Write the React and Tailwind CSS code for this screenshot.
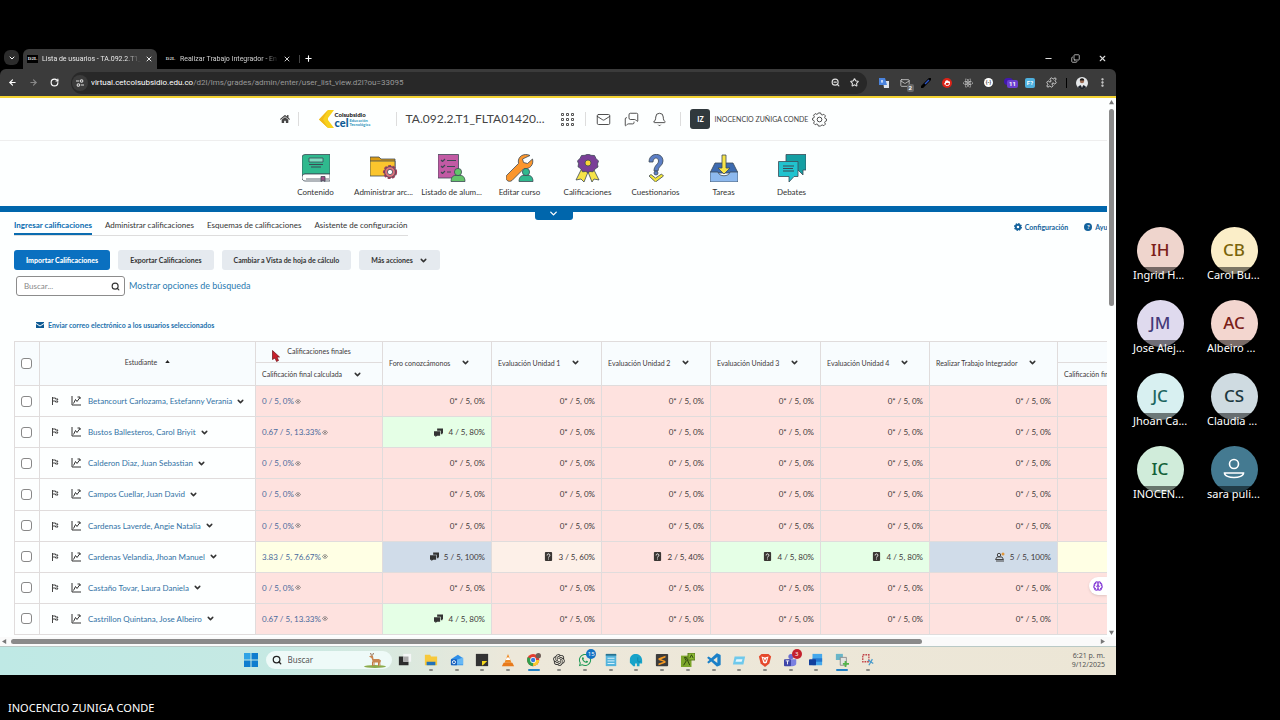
import { FaWhatsapp, FaHome, FaReact } from "react-icons/fa";
import { BiLogoVisualStudio } from "react-icons/bi";
import { RiOpenaiFill } from "react-icons/ri";
import {
  ArrowLeft, ArrowRight, Bell, Brain, ChevronDown, Copy, EllipsisVertical, Hand, Mail, MessagesSquare,
  Minus, Plus, Puzzle, RotateCw, Search, Star, X, ZoomOut,
} from "lucide-react";

const tools = [
  { label: "Contenido", icon: <BookIcon /> },
  { label: "Administrar arc...", icon: <FolderIcon /> },
  { label: "Listado de alum...", icon: <ClassIcon /> },
  { label: "Editar curso", icon: <WrenchIcon /> },
  { label: "Calificaciones", icon: <RibbonIcon /> },
  { label: "Cuestionarios", icon: <QuestionIcon /> },
  { label: "Tareas", icon: <InboxIcon /> },
  { label: "Debates", icon: <TalkIcon /> },
];

const ZERO = { text: "0* / 5, 0%", bg: "bg-[#fee2df]" };
const zeros = (n) => Array(n).fill(ZERO);
const red = "bg-[#fee2df]";
const green = "bg-[#e5ffe6]";
const blue = "bg-[#d0dce9]";

const students = [
  { name: "Betancourt Carlozama, Estefanny Verania", final: "0 / 5, 0%", bg: red, grades: zeros(6) },
  {
    name: "Bustos Ballesteros, Carol Briyit", final: "0.67 / 5, 13.33%", bg: red,
    grades: [{ text: "4 / 5, 80%", bg: green, icon: "forum" }, ...zeros(5)],
  },
  { name: "Calderon Diaz, Juan Sebastian", final: "0 / 5, 0%", bg: red, grades: zeros(6) },
  { name: "Campos Cuellar, Juan David", final: "0 / 5, 0%", bg: red, grades: zeros(6) },
  { name: "Cardenas Laverde, Angie Natalia", final: "0 / 5, 0%", bg: red, grades: zeros(6) },
  {
    name: "Cardenas Velandia, Jhoan Manuel", final: "3.83 / 5, 76.67%", bg: "bg-[#ffffe4]",
    grades: [
      { text: "5 / 5, 100%", bg: blue, icon: "forum" },
      { text: "3 / 5, 60%", bg: "bg-[#fdf0e8]", icon: "quiz" },
      { text: "2 / 5, 40%", bg: red, icon: "quiz" },
      { text: "4 / 5, 80%", bg: green, icon: "quiz" },
      { text: "4 / 5, 80%", bg: green, icon: "quiz" },
      { text: "5 / 5, 100%", bg: blue, icon: "task" },
    ],
  },
  { name: "Castaño Tovar, Laura Daniela", final: "0 / 5, 0%", bg: red, grades: zeros(6) },
  {
    name: "Castrillon Quintana, Jose Albeiro", final: "0.67 / 5, 13.33%", bg: red,
    grades: [{ text: "4 / 5, 80%", bg: green, icon: "forum" }, ...zeros(5)],
  },
];

const items = [
  "Foro conozcámonos", "Evaluación Unidad 1", "Evaluación Unidad 2",
  "Evaluación Unidad 3", "Evaluación Unidad 4", "Realizar Trabajo Integrador",
];

const people = [
  { initials: "IH", name: "Ingrid H...", color: "bg-[#efd5cd] text-[#7a2018]" },
  { initials: "CB", name: "Carol Bu...", color: "bg-[#fbeec8] text-[#7a6408]" },
  { initials: "JM", name: "Jose Alej...", color: "bg-[#dfdaee] text-[#443a78]" },
  { initials: "AC", name: "Albeiro ...", color: "bg-[#f3d6cf] text-[#7a2018]" },
  { initials: "JC", name: "Jhoan Ca...", color: "bg-[#d8f0f1] text-[#1c6660]" },
  { initials: "CS", name: "Claudia ...", color: "bg-[#cfdbe1] text-[#1d3840]" },
  { initials: "IC", name: "INOCEN...", color: "bg-[#d0ecda] text-[#136038]" },
  { initials: "", name: "sara puli...", color: "bg-[#447a91] text-white" },
];

/* COURSE TOOL ICONS */

function Draw({ children }) {
  return (
    <svg viewBox="0 0 28 28" className="size-7" fill="none" stroke="#3d4a55" strokeWidth="0.8" strokeLinejoin="round" aria-hidden="true">
      {children}
    </svg>
  );
}

function Person({ x, y, fill }) {
  return (
    <g fill={fill} transform={`translate(${x} ${y})`}>
      <path d="M0 13.500c0-4 2-6 4-6h6c2 0 4 2 4 6z" />
      <circle cx="7" cy="4" r="3.600" />
    </g>
  );
}

function BookIcon() {
  return (
    <Draw>
      <path d="M0 3.500A3 3 0 0 1 3 .5h25V20H3a3 3 0 0 0-3 3z" fill="#2fb98e" />
      <path d="M28 20H3c-4 0-4 7 0 7h25z" fill="#fff" />
      <path d="M4 25h23" />
      <path d="M19 22.500h4v5l-2-1.500-2 1.500z" fill="#a34f86" />
      <path d="M7 4h14v4H7z" fill="#7fdcc0" />
      <path d="M7 10.500h14M9 13h10" strokeWidth="1.200" />
    </Draw>
  );
}

function FolderIcon() {
  return (
    <Draw>
      <path d="M0 3h9l2 2h14v16H0z" fill="#d99b14" />
      <path d="M0 7h25v15H0z" fill="#fbc52d" />
      <circle cx="20" cy="18" r="6" fill="#c9586f" strokeWidth="2.200" stroke="#a03d5c" strokeDasharray="2.800 1.500" />
      <circle cx="20" cy="18" r="5.400" fill="#e0707c" />
      <circle cx="20" cy="18" r="2.600" fill="#fff" />
    </Draw>
  );
}

function ClassIcon() {
  return (
    <Draw>
      <path d="M0 .5h20.500V24H0z" fill="#c25aa4" />
      <path d="m3 6 1.500 1.500L7 5m-4 7 1.500 1.500L7 11m-4 7 1.500 1.500L7 17M9 6.500h9M9 12.500h8M9 18h4" strokeWidth="1.100" />
      <Person x="13" y="14" fill="#63c46a" />
    </Draw>
  );
}

function WrenchIcon() {
  return (
    <Draw>
      <path d="M24 1.500c-6-3-13 1-11.500 8L.5 21.500c-2 4 2 7.500 5.500 5L18 14.500c6 1 10-4 8.500-9.500l-5 4.500-4-1-1-3.500z" fill="#fb962d" />
      <Person x="13" y="14" fill="#2fb98e" />
    </Draw>
  );
}

function RibbonIcon() {
  return (
    <Draw>
      <path d="m8 14-6 12 5-1 3 3 4-10 4 10 2-3 5 1-6-12z" fill="#f7e448" />
      <path d="m14 0 3 1.300 3.500.2 1.500 3 2.500 2.500-1 3 .5 3-3 2-2 2.800-3-.3-2 1-2.500-1-3 .3-1.500-3-3-2 .5-3-1-3L6 4.500l1.500-3 3.500-.2z" fill="#7a3f97" />
      <circle cx="14" cy="9" r="3" fill="#fbd436" />
    </Draw>
  );
}

function QuestionIcon() {
  return (
    <Draw>
      <path d="M7 8c0-10 14-10 14-1 0 5-5 5-5 10h-4c0-6 4.500-6.500 4.500-10 0-4-5.500-4-5.500 1z" fill="#5c7fc6" />
      <circle cx="14" cy="19" r="2" fill="#5c7fc6" />
      <path d="m7 22 2-1.500 4.500 3.500 6-4 2 2-8 6z" fill="#f4e636" />
    </Draw>
  );
}

function InboxIcon() {
  return (
    <Draw>
      <path d="M5 9h18l5 10H0z" fill="#3d6bb0" />
      <path d="M0 18h8c1 5 11 5 12 0h8v10H0z" fill="#8db9ee" />
      <path d="M12 1h4v13h4l-6 6-6-6h4z" fill="#f7e448" />
    </Draw>
  );
}

function TalkIcon() {
  return (
    <Draw>
      <path d="M8 .5h20V16h-3v5l-5-5H8z" fill="#149fa3" />
      <path d="M.500 7.500H20v15h-4L11 28v-5.500H.500z" fill="#21c3cf" />
      <path d="M5 12h11M5 14.500h10M5 17h11" strokeWidth="1.100" />
    </Draw>
  );
}

/* SMALL ICONS */

function GradeIcon({ type }) {
  if (type === "forum") {
    return (
      <svg viewBox="0 0 10 10" className="size-[9px]" fill="#333" aria-hidden="true">
        <path d="M3.500.500H10V6H9v1.500L7.500 6V3h-4zM0 3.500h6.800v5H3.500L1.500 10V8.500H0z" />
      </svg>
    );
  }
  if (type === "quiz") {
    return (
      <svg viewBox="0 0 10 10" className="size-[9px]" aria-hidden="true">
        <rect x="1" width="8" height="10" rx="1" fill="#3a3633" />
        <path d="M3.500 3.800c0-2.300 3-2.300 3 0C6.500 5 5 5 5 6.200M5 7.300v1" stroke="#fff" strokeWidth="1" fill="none" />
      </svg>
    );
  }
  return (
    <svg viewBox="0 0 10 10" className="size-[10px]" aria-hidden="true">
      <path d="M1 9h8M.500 7.500 2 5h5l1.500 2.500z" fill="none" stroke="#444" />
      <circle cx="4" cy="3" r="1.700" fill="none" stroke="#444" />
      <circle cx="8" cy="2" r="1.500" fill="#e0963b" />
    </svg>
  );
}

function Flag() {
  return (
    <svg viewBox="0 0 8 8" className="size-2" fill="none" stroke="#444" aria-hidden="true">
      <path d="M1.500 0v8M1.500 1h3v1H7L6 3.500 7 5H4.500V4h-3" />
    </svg>
  );
}

function Progress() {
  return (
    <svg viewBox="0 0 10 10" className="size-[10px]" fill="none" stroke="#333" aria-hidden="true">
      <path d="M1 0v9h9M2.500 7.500l2-4 1.500 2 3-4M6.500 1h2.500v2" />
    </svg>
  );
}

function Eye() {
  return (
    <svg viewBox="0 0 8 6" className="h-[5px] w-[6px]" aria-hidden="true">
      <path d="M.5 3c2-3 5-3 7 0-2 3-5 3-7 0z" fill="none" stroke="#666" />
      <circle cx="4" cy="3" r="1" fill="#555" />
    </svg>
  );
}

// eight-lobed outline gear
function Gear() {
  return (
    <svg viewBox="0 0 16 16" className="size-[15px]" fill="none" stroke="#444" strokeLinejoin="round" aria-hidden="true">
      <path d="M6.800 1h2.400l.6 1.700 1.100.5 1.700-.8 1.700 1.700-.8 1.700.5 1.100 1.500.6v1.900l-1.500.7-.5 1.100.8 1.700-1.700 1.700-1.700-.8-1.100.5L9.200 15H6.800l-.6-1.700-1.100-.5-1.700.8-1.700-1.700.8-1.700L2 9.100.500 8.500V6.800L2 6.200l.5-1.100-.8-1.700 1.700-1.700 1.700.8 1.100-.5z" />
      <circle cx="8" cy="8" r="2.500" />
    </svg>
  );
}

function SettingsDot() {
  return (
    <svg viewBox="0 0 10 10" className="size-2" aria-hidden="true">
      <circle cx="5" cy="5" r="4" fill="#14629c" stroke="#14629c" strokeWidth="2" strokeDasharray="1.800 1.300" />
      <circle cx="5" cy="5" r="1.600" fill="#fff" />
    </svg>
  );
}

function Caret({ label }) {
  return (
    <button aria-label={label} className="shrink-0">
      <ChevronDown className="size-[9px] text-[#333]" strokeWidth={4} />
    </button>
  );
}

function Check({ label }) {
  return (
    <input type="checkbox" aria-label={label} className="mx-auto block size-[11px] appearance-none rounded-[3px] border border-[#888] bg-white" />
  );
}

/* BROWSER */

function Tab({ title, active }) {
  return (
    <div className={active ? "flex h-5 w-[134px] items-center gap-1 rounded-t-md bg-[#3b3b3b] px-1 text-[#e8e8e8]" : "flex h-5 w-[134px] items-center gap-1 px-1 text-[#d0d0d0]"}>
      <span className="w-[11px] shrink-0 bg-black text-center font-['Liberation_Serif',serif] text-[5px] font-bold">D2L</span>
      <span className="min-w-0 flex-1 whitespace-nowrap [mask-image:linear-gradient(to_right,black_85%,transparent)]">{title}</span>
      <button aria-label={"Cerrar " + title}><X className="size-2" strokeWidth={3} /></button>
    </div>
  );
}

function Extensions() {
  return (
    <div className="flex shrink-0 items-center gap-[11px] pr-2">
      <svg viewBox="0 0 10 10" className="size-[10px]">
        <path d="M4 3h6v7H5z" fill="#dde3ea" /><path d="M0 0h6l2 7H0z" fill="#4a83dd" />
        <path d="M2 3h2M3 2v3" stroke="#fff" strokeWidth=".8" />
      </svg>
      <span className="relative">
        <Mail className="size-[10px] text-[#ccc]" />
        <span className="absolute -right-1 -bottom-1 rounded-xs bg-[#666] px-[2px] text-[6px] leading-[8px] font-bold text-white">2</span>
      </span>
      <svg viewBox="0 0 10 10" className="size-[10px]">
        <path d="M1 9 9 1" stroke="#000" strokeWidth="3" strokeLinecap="round" /><path d="m4 6 4-4" stroke="#2e56c8" strokeWidth="1.500" />
      </svg>
      <span className="rounded-full bg-[#dc2318] p-[2px] text-white"><Hand className="size-[6px]" strokeWidth={4} /></span>
      <FaReact className="size-[10px] text-[#ddd]" />
      <span className="grid size-[9px] place-items-center rounded-full bg-white text-[5px] leading-none font-bold text-[#444]">{"{-}"}</span>
      <span className="relative size-[10px]">
        <span className="block h-[7px] w-[9px] rounded-full bg-[#4318b0]" />
        <span className="absolute top-[2px] left-[3px] rounded-xs bg-[#6b3fd0] px-[2px] text-[6px] leading-[8px] font-bold text-white">11</span>
      </span>
      <span className="grid size-[10px] place-items-center rounded-[2px] bg-[#4eb0de] text-[6px] leading-none font-bold text-white">F?</span>
      <div className="flex items-center gap-[9px]">
        <Puzzle className="size-[11px] text-[#ddd]" />
        <span className="h-[10px] w-px bg-black" />
        <svg viewBox="0 0 12 12" className="size-3">
          <circle cx="6" cy="6" r="6" fill="#e6e8ea" />
          <path d="M2 10.500C2 7 10 7 10 10.500 8 12.500 4 12.500 2 10.500z" fill="#20242c" />
          <circle cx="6" cy="4" r="2.200" fill="#9c6c54" /><path d="M3.800 3.500c0-3 4.400-3 4.400 0z" fill="#1c1816" />
          <path d="m5 8 1 3 1-3z" fill="#fff" />
        </svg>
        <button aria-label="Menú"><EllipsisVertical className="size-[11px] text-[#ddd]" strokeWidth={3} /></button>
      </div>
    </div>
  );
}

function BrowserBar() {
  return (
    <div className="font-[Roboto,sans-serif] text-[7px]">
      <div className="flex h-6 items-end bg-black pt-1 pl-1">
        <button aria-label="Buscar pestañas" className="mr-1 mb-1 grid size-[15px] place-items-center rounded-md bg-[#2c2c2c] text-white">
          <ChevronDown className="size-2" strokeWidth={3} />
        </button>
        <Tab title="Lista de usuarios - TA.092.2.T1_" active />
        <span className="w-1" />
        <Tab title="Realizar Trabajo Integrador - En" />
        <span className="mx-1 mb-[6px] h-2 w-px bg-[#444]" />
        <button aria-label="Nueva pestaña" className="mb-[6px] text-white"><Plus className="size-[9px]" strokeWidth={3} /></button>
        <div className="mb-[6px] ml-auto flex gap-[18px] pr-[9px] text-[#ddd]">
          <button aria-label="Minimizar"><Minus className="size-[9px]" strokeWidth={3} /></button>
          <button aria-label="Restaurar"><Copy className="size-[9px] -scale-y-100" /></button>
          <button aria-label="Cerrar"><X className="size-[9px]" strokeWidth={3} /></button>
        </div>
      </div>
      <div className="flex h-[27px] items-center gap-3 rounded-t-md bg-[#3b3b3b] pl-2">
        <button aria-label="Atrás"><ArrowLeft className="size-[9px] text-white" strokeWidth={3} /></button>
        <button aria-label="Adelante"><ArrowRight className="size-[9px] text-[#888]" strokeWidth={3} /></button>
        <button aria-label="Recargar"><RotateCw className="size-[9px] text-white" strokeWidth={3} /></button>
        <div className="flex h-[22px] min-w-0 flex-1 items-center rounded-full bg-[#282828] pr-2 pl-px text-[8px] text-[#999]">
          <span className="mr-[3px] grid size-4 place-items-center rounded-full bg-[#3b3b3b]">
            <svg viewBox="0 0 10 10" className="size-2" fill="none" stroke="#ddd" strokeWidth="1.300">
              <path d="M0 2.500h4M6 7.500h4" /><circle cx="7" cy="2.500" r="1.600" /><circle cx="3" cy="7.500" r="1.600" />
            </svg>
          </span>
          <span className="min-w-0 flex-1 truncate">
            <span className="text-white">virtual.cetcolsubsidio.edu.co</span>/d2l/lms/grades/admin/enter/user_list_view.d2l?ou=33095
          </span>
          <ZoomOut className="mr-[10px] size-[9px] text-[#ddd]" strokeWidth={3} />
          <Star className="size-[9px] text-[#ddd]" strokeWidth={3} />
        </div>
        <Extensions />
      </div>
    </div>
  );
}

/* COURSE HEADER */

function CourseHeader() {
  return (
    <header>
      <div className="flex h-[43px] items-center justify-center border-b border-[#eee] text-[#444]">
        <FaHome className="size-[10px]" />
        <span className="mr-5 ml-2 h-[14px] w-px bg-[#ddd]" />
        <div className="flex w-[58px] items-center">
          <svg viewBox="0 0 16 18" className="h-[18px] w-4 shrink-0">
            <path d="M9 0h6L9 8v2l6 8H9L0 9.500z" fill="#f8d11c" /><path d="M0 9.500 9 0 4 9.500 9 18z" fill="#f1b91a" />
          </svg>
          <div>
            <p className="text-[6px] leading-[7px] font-black text-[#222]">Colsubsidio</p>
            <div className="flex items-center gap-px">
              <span className="text-[11px] leading-[9px] font-black text-[#0d5a94]">cel</span>
              <span className="text-[4px] leading-[4px] font-bold text-[#2a91bb]">Educación<br />Tecnológica</span>
            </div>
          </div>
        </div>
        <span className="mr-[9px] ml-[19px] h-[14px] w-px bg-[#ddd]" />
        <h1 className="text-[12px]">TA.092.2.T1_FLTA01420...</h1>
        <button aria-label="Mis cursos" className="ml-4">
          <svg viewBox="0 0 15 15" className="size-[15px]" fill="none" stroke="#555">
            <path d="M1.500 1.500h2v2h-2zM6.500 1.500h2v2h-2zM11.500 1.500h2v2h-2zM1.500 6.500h2v2h-2zM6.500 6.500h2v2h-2zM11.500 6.500h2v2h-2zM1.500 11.500h2v2h-2zM6.500 11.500h2v2h-2zM11.500 11.500h2v2h-2z" />
          </svg>
        </button>
        <span className="mx-[10px] h-[14px] w-px bg-[#ddd]" />
        <div className="flex items-center gap-[13px]">
          <button aria-label="Correo"><Mail className="size-[15px]" strokeWidth={1.5} /></button>
          <button aria-label="Mensajes"><MessagesSquare className="size-[15px] -scale-x-100" strokeWidth={1.5} /></button>
          <button aria-label="Notificaciones"><Bell className="size-[15px]" strokeWidth={1.5} /></button>
        </div>
        <span className="mr-[9px] ml-[13px] h-[14px] w-px bg-[#ddd]" />
        <button className="flex items-center gap-1 text-[7px]">
          <span className="grid size-5 place-items-center rounded-[3px] bg-[#30393d] font-black text-white">IZ</span>
          INOCENCIO ZUÑIGA CONDE
        </button>
        <button aria-label="Configuración del curso" className="ml-1"><Gear /></button>
      </div>
      <nav className="flex h-[65px] justify-center pt-[13px]">
        {tools.map((t) => (
          <a key={t.label} href="#" className="flex w-[68px] flex-col items-center gap-[5px] text-[8px] leading-[10px] whitespace-nowrap text-[#333]">
            {t.icon}
            {t.label}
          </a>
        ))}
      </nav>
      <div className="relative h-[6px] bg-[#0066ac]">
        <button aria-label="Mostrar más" className="absolute top-0 left-1/2 grid h-[14px] w-[38px] -translate-x-1/2 place-items-center rounded-b-[3px] bg-[#0066ac] text-white">
          <ChevronDown className="size-[11px]" strokeWidth={3} />
        </button>
      </div>
    </header>
  );
}

/* GRADES TABLE */

function GradesTable() {
  const cell = "border border-[#e0dcdc]";
  return (
    <table className="h-[294px] w-[1171px] table-fixed border-collapse text-[8px] leading-[10px] text-[#40383a]">
      <colgroup>
        <col className="w-[25px]" />
        <col className="w-[216px]" />
        <col className="w-[127px]" />
        <col className="w-[109px]" />
        <col className="w-[110px]" />
        <col className="w-[109px]" />
        <col className="w-[110px]" />
        <col className="w-[109px]" />
        <col className="w-[128px]" />
        <col className="w-[128px]" />
      </colgroup>
      <thead className="bg-[#f8fcfe] text-[7px]">
        <tr className="h-[21px]">
          <th rowSpan={2} className={`${cell} pr-[2px]`}><Check label="Seleccionar todos" /></th>
          <th rowSpan={2} className={`${cell} pb-1 font-normal`}>
            <button className="inline-flex items-center gap-2">
              Estudiante
              <svg viewBox="0 0 6 4" className="h-[3px] w-[5px]"><path d="M0 4 3 0l3 4z" fill="#222" /></svg>
            </button>
          </th>
          <th className={`${cell} pb-[2px] font-normal`}>Calificaciones finales</th>
          {items.map((item) => (
            <th key={item} rowSpan={2} className={`${cell} pb-[2px] pl-[6px] font-normal`}>
              <span className="flex items-center gap-[11px] whitespace-nowrap">
                {item}
                <Caret label={"Acciones de " + item} />
              </span>
            </th>
          ))}
          <th className={cell} />
        </tr>
        <tr className="h-[23px]">
          <th className={`${cell} pl-[6px] font-normal`}>
            <span className="flex items-center gap-[11px] whitespace-nowrap">
              Calificación final calculada
              <Caret label="Acciones de calificación final" />
            </span>
          </th>
          <th className={`${cell} pl-[6px] text-left font-normal whitespace-nowrap`}>Calificación final ajustada</th>
        </tr>
      </thead>
      <tbody>
        {students.map((s) => (
          <tr key={s.name} className="h-[31px]">
            <td className={`${cell} pr-[2px]`}><Check label={"Seleccionar " + s.name} /></td>
            <td className={`${cell} pl-[11px]`}>
              <div className="flex items-center whitespace-nowrap">
                <Flag />
                <span className="mr-[7px] ml-3"><Progress /></span>
                <a href="#" className="mr-1 text-[#3272a5]">{s.name}</a>
                <Caret label={"Acciones de " + s.name} />
              </div>
            </td>
            <td className={`${cell} ${s.bg} pl-[6px]`}>
              <a href="#" className="flex items-center gap-px text-[#4a6a9c]">{s.final}<Eye /></a>
            </td>
            {s.grades.map((g, i) => (
              <td key={i} className={`${cell} ${g.bg} pr-[6px]`}>
                <div className="flex items-center justify-end gap-[5px] whitespace-nowrap">
                  {g.icon && <GradeIcon type={g.icon} />}
                  {g.text}
                </div>
              </td>
            ))}
            <td className={`${cell} ${s.bg}`} />
          </tr>
        ))}
      </tbody>
    </table>
  );
}

function GradesPage() {
  const gray = "flex h-5 items-center gap-[6px] rounded-[3px] bg-[#e5eaef] px-3 text-[#333]";
  return (
    <main className="relative min-w-0 flex-1 overflow-hidden bg-[#fdffff] font-[Lato,sans-serif]">
      <CourseHeader />
      <div className="pb-[2px] pl-[14px]">
        <div className="-mr-2 flex items-start justify-between pt-[7px]">
          <nav className="flex gap-[13px] border-b border-[#ddd] text-[8px] leading-[12px] text-[#333]">
            <a href="#" className="h-4 border-b-2 border-[#0a6cb0] font-bold text-[#0a6cb0]">Ingresar calificaciones</a>
            <a href="#">Administrar calificaciones</a>
            <a href="#">Esquemas de calificaciones</a>
            <a href="#">Asistente de configuración</a>
          </nav>
          <div className="flex gap-4 pt-[2px] text-[7px] leading-[12px] font-bold text-[#14629c]">
            <a href="#" className="flex items-center gap-[3px]"><SettingsDot />Configuración</a>
            <a href="#" className="flex items-center gap-[3px]">
              <span className="grid size-2 place-items-center rounded-full bg-[#14629c] text-[6px] leading-none text-white">?</span>Ayuda
            </a>
          </div>
        </div>
        <div className="mt-[14px] flex gap-2 text-[7px] font-bold">
          <button className="h-5 rounded-[3px] bg-[#0a70c0] px-3 font-black text-white">Importar Calificaciones</button>
          <button className={gray}>Exportar Calificaciones</button>
          <button className={gray}>Cambiar a Vista de hoja de cálculo</button>
          <button className={gray}>Más acciones<ChevronDown className="size-[9px]" strokeWidth={4} /></button>
        </div>
        <div className="mt-[6px] flex items-center gap-1 pl-[2px]">
          <label className="flex h-5 w-[109px] items-center rounded-[3px] border border-[#8c8c8c] bg-white pr-1 pl-[7px]">
            <input type="search" aria-label="Buscar" placeholder="Buscar..." className="w-0 min-w-0 flex-1 text-[8px] outline-none placeholder:text-[#888]" />
            <Search className="size-[9px] text-[#333]" strokeWidth={3} />
          </label>
          <a href="#" className="text-[9px] leading-[12px] text-[#2a7ab0]">Mostrar opciones de búsqueda</a>
        </div>
        <a href="#" className="mt-6 mb-[11px] flex h-[10px] w-fit items-center gap-1 pl-[22px] text-[7px] leading-[10px] font-bold text-[#1a70ad]">
          <svg viewBox="0 0 8 6" className="h-[6px] w-2"><path d="M0 0h8v1L4 3.500 0 1zM0 2l4 2.500L8 2v4H0z" fill="#0d5a94" /></svg>
          Enviar correo electrónico a los usuarios seleccionados
        </a>
        <GradesTable />
      </div>
      {/* mouse pointer and floating assistant */}
      <svg viewBox="0 0 8 12" className="absolute top-[252px] left-[272px] h-3 w-2"><path d="M.5.5v9L3 8l1.500 3.500 2-1L5 7h2.500z" fill="#c8202c" stroke="#6b1018" strokeWidth=".7" /></svg>
      <button aria-label="Asistente" className="absolute right-0 bottom-[42px] grid size-[18px] place-items-center rounded-l-full bg-white text-[#8a45d8] shadow">
        <Brain className="size-[10px]" strokeWidth={3} />
      </button>
    </main>
  );
}

function Arrow({ d }) {
  return <svg viewBox="0 0 6 6" className="size-[5px] shrink-0"><path d={d} fill="#777" /></svg>;
}

/* TASKBAR */

const apps = [
  { name: "Vista de tareas", open: false, icon: <><path d="M6 1h9v9H6z" fill="#f4f6f6" /><path d="M1 4h5v6h6v4H1z" fill="#2c2c2c" /><path d="M6 4h6v6H6z" fill="#aaa" /></> },
  { name: "Explorador", open: true, icon: <><path d="M1 2h6l1 2h7v10H1z" fill="#f7c93c" /><path d="M3 10h10v4H3z" fill="#2272b8" /></> },
  { name: "Outlook", open: true, icon: <><path d="m1 7 8-5 6 4v8H3z" fill="#2f8fe8" /><path d="M7 8 15 5v8H7z" fill="#67b8f5" /><rect x="1" y="7" width="7" height="7" rx="1" fill="#1560bd" /><circle cx="4.500" cy="10.500" r="1.800" fill="none" stroke="#fff" /></> },
  { name: "Notas", open: true, icon: <><path d="M1 1h14v14H1z" fill="#333" /><path d="M8 9h6l-5 5H8z" fill="#f5d91c" /></> },
  { name: "VLC", open: true, icon: <><path d="m8 1 4 10H4z" fill="#f08a24" /><path d="m6.500 5h3l1 3h-5z" fill="#fff" /><path d="M3 11h10l2 4H1z" fill="#e87a1c" /></> },
  { name: "Chrome", open: "active", icon: <><circle cx="7" cy="8" r="7" fill="#e23d30" /><path d="M7 8 1 4.500A7 7 0 0 0 7 15z" fill="#2fa14f" /><path d="M7 8h7a7 7 0 0 1-7 7z" fill="#f8cb30" /><circle cx="7" cy="8" r="3.300" fill="#fff" /><circle cx="7" cy="8" r="2.500" fill="#3878e0" /><circle cx="13" cy="3" r="3" fill="#6d5d56" /></> },
  { name: "ChatGPT", open: true, node: <RiOpenaiFill className="size-[14px] text-[#222]" /> },
  { name: "WhatsApp", open: true, badge: "15", badgeColor: "bg-[#1372c4]", node: <FaWhatsapp className="size-[14px] text-[#1f9a56]" /> },
  { name: "Bloc de notas", open: true, icon: <><path d="M2 2h12v13H2z" fill="#54b4dc" /><path d="M2 1h12v2H2z" fill="#27718f" /><path d="M4 6h8M4 9h8M4 12h8" stroke="#e9f8ff" /></> },
  { name: "Base de datos", open: true, icon: <><path d="M1 8c0-9 13-9 14 0v4h-3v3H9v-3H7v3H5l-4-4z" fill="#18a3c9" /><path d="M10 5v4c0 2 3 2 3 0" fill="none" stroke="#0f86a8" /></> },
  { name: "Sublime", open: true, icon: <><rect x="1" y="1" width="14" height="14" rx="1" fill="#3c3c3c" /><path d="m12 3-8 3v2l6 2-6 2v2l8-3V9L7 7l5-2z" fill="#f79a22" /></> },
  { name: "Editor", open: true, icon: <><path d="M0 3h12v13H0z" fill="#7ca62a" /><path d="M8 0h8v8H8z" fill="#8cba35" stroke="#506e18" /><path d="m3 14 3-5-2-4h2l4 9M10 6l2-4 2 4" fill="none" stroke="#263b0a" /></> },
  { name: "VS Code", open: true, node: <BiLogoVisualStudio className="size-4 text-[#1b80c8]" /> },
  { name: "Ejecutar", open: true, icon: <><path d="M3 4h12l-2 9H1z" fill="#6fc9ec" /><path d="M5 7h7l-1 3H4z" fill="#e4f7ff" /></> },
  { name: "Brave", open: true, icon: <><path d="m4 1h8l3 3-2 8-5 4-5-4-2-8z" fill="#e5492c" /><path d="m4 4 4 1 4-1-2 7-2 1-2-1z" fill="#fff" /><path d="m6 6 2 4 2-4" fill="none" stroke="#e5492c" /></> },
  { name: "Teams", open: true, badge: "3", badgeColor: "bg-[#c4222e]", icon: <><circle cx="8" cy="4" r="3" fill="#6a6fd0" /><path d="M4 7h10v5c0 4-8 4-9 1z" fill="#7b80e0" /><rect x="0" y="7" width="8" height="8" rx="1" fill="#3f45a8" /><path d="M2 9h4M4 9v4" stroke="#fff" /></> },
  { name: "Documentos", open: true, icon: <><path d="M4 1h11v13H4z" fill="#45a8ec" /><path d="M4 6h11v4H4z" fill="#2478d0" /><rect x="0" y="7" width="8" height="7" rx="1" fill="#123f9c" /></> },
  { name: "Conexión", open: "active", icon: <><path d="M1 1h8v7H1z" fill="#69b6c8" /><path d="M6 5h7v9H6z" fill="#e4e4e0" stroke="#888" /><path d="M12 9v7M9 12.500h7" stroke="#54b44a" strokeWidth="2" /></> },
  { name: "Recortes", open: true, icon: <><path d="M2 2h7v8H2z" fill="none" stroke="#c2454a" strokeWidth="1.500" strokeDasharray="2 1" /><path d="m8 8 6 4M9 14l4-7" stroke="#4b9ccc" strokeWidth="1.500" /></> },
];

function Taskbar() {
  return (
    <div className="grid h-[29px] grid-cols-[minmax(0,1fr)_auto_minmax(0,1fr)] items-center border-t border-[#b9c9c6] bg-[linear-gradient(to_right,#bfe9e5_0%,#c6e9e3_25%,#ede8da_46%,#ece6d6_100%)] pb-[2px] font-['Noto_Sans',sans-serif]">
      <span />
      <div className="flex items-center pl-2">
        <button aria-label="Inicio" className="mr-2">
          <svg viewBox="0 0 14 14" className="size-[14px]" fill="#0f7dcf"><path d="M0 0h6.500v6.500H0z" fill="#2fa4e6" /><path d="M7.500 0H14v6.500H7.500zM0 7.500h6.500V14H0zM7.500 7.500H14V14H7.500z" /></svg>
        </button>
        <label className="mr-px flex h-[18px] w-[126px] items-center gap-[6px] rounded-full bg-[#eefaf8] px-[6px]">
          <Search className="size-[10px] text-[#222]" strokeWidth={3} />
          <input type="search" aria-label="Buscar en Windows" placeholder="Buscar" className="w-0 min-w-0 flex-1 text-[8px] outline-none placeholder:text-[#555]" />
          <svg viewBox="0 0 22 16" className="h-4 w-[22px]">
            <ellipse cx="11" cy="14.500" rx="11" ry="1.500" fill="#8bab4a" />
            <path d="M8.500 14V9.500M10 14V9.500M14.500 14V9.500M16 13.500 15.500 9" fill="none" stroke="#c07a44" strokeWidth="1" />
            <path d="M5 4.500 7 3.500 9 4l.5 3H15l2 1.500-.5 2H9L7.500 6z" fill="#c98550" />
            <path d="M7.500 3.500 6.500 1M8.500 3.500 9.500 1" fill="none" stroke="#7a4a28" strokeWidth=".8" />
          </svg>
        </label>
        <div className="grid w-[488px] grid-cols-[repeat(19,minmax(0,1fr))]">
          {apps.map((a) => (
            <button key={a.name} aria-label={a.name} className="relative flex h-[26px] flex-col items-center justify-center">
              {a.node || <svg viewBox="0 0 16 16" className="size-[14px]">{a.icon}</svg>}
              {a.badge && <span className={`absolute top-[2px] left-[14px] grid size-[10px] place-items-center rounded-full text-[6px] leading-none text-white ${a.badgeColor}`}>{a.badge}</span>}
              {a.open === "active" && <span className="absolute bottom-[2px] h-[2px] w-3 rounded-full bg-[#2482c4]" />}
              {a.open === true && <span className="absolute bottom-[2px] h-[2px] w-1 rounded-full bg-[#8b8b86]" />}
            </button>
          ))}
        </div>
      </div>
      <div className="pr-[11px] text-right text-[7px] leading-[9px] text-[#555]">
        6:21 p. m.<br />9/12/2025
      </div>
    </div>
  );
}

function Participants() {
  return (
    <aside className="w-[164px] shrink-0 pt-[227px] pr-[9px] pl-[7px] font-['Noto_Sans',sans-serif]">
      <ul className="grid auto-rows-[73px] grid-cols-2">
        {people.map((p) => (
          <li key={p.name} className="relative flex justify-center">
            <div className={`grid size-[47px] place-items-center rounded-full pb-px text-[17px] leading-[22px] font-medium ${p.color}`}>
              {p.initials || (
                <svg viewBox="0 0 22 22" className="size-[22px]" fill="none" stroke="white" strokeWidth="1.600">
                  <circle cx="11" cy="6" r="4.500" /><path d="M1.500 15h19c0 6-19 6-19 0z" />
                </svg>
              )}
            </div>
            <p className="absolute top-10 left-[9px] w-[62px] bg-black/50 pl-px text-[11px] leading-[15px] whitespace-nowrap text-white">{p.name}</p>
          </li>
        ))}
      </ul>
    </aside>
  );
}

export default function App() {
  return (
    <div className="flex min-h-screen bg-black">
      <div className="flex min-w-0 flex-1 flex-col pt-[45px]">
        <BrowserBar />
        <div className="flex border-t-2 border-[#f5d433] bg-[#fdffff]">
          <GradesPage />
          <div className="flex w-[9px] shrink-0 flex-col items-center justify-between py-[2px]">
            <Arrow d="M0 5 3 0l3 5z" />
            <div className="mt-1 h-[197px] w-[5px] rounded-full bg-[#8a8a8a]" />
            <span className="flex-1" />
            <Arrow d="M0 1h6L3 6z" />
          </div>
        </div>
        <div className="flex h-[9px] items-center gap-1 bg-[#fafafa] pr-[11px] pl-[2px]">
          <Arrow d="M5 0v6L0 3z" />
          <div className="flex-1"><div className="h-[5px] w-[84%] rounded-full bg-[#8a8a8a]" /></div>
          <Arrow d="M1 0v6l5-3z" />
        </div>
        <Taskbar />
        <p className="mt-6 pl-2 font-['Noto_Sans',sans-serif] text-[11px] leading-[18px] text-white">INOCENCIO ZUNIGA CONDE</p>
      </div>
      <Participants />
    </div>
  );
}
